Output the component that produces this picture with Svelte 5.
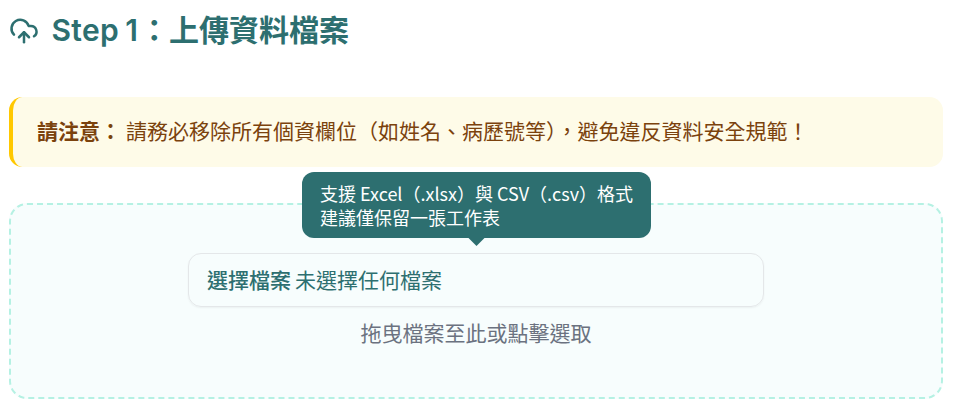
<script>
  const tips = ['支援 Excel（.xlsx）與 CSV（.csv）格式', '建議僅保留一張工作表'];
</script>

<main lang="zh-Hant">
  <h2>
    <svg viewBox="0 0 24 24" width="30" height="30" fill="none" stroke="currentColor" stroke-width="2" stroke-linecap="round" stroke-linejoin="round" aria-hidden="true">
      <path d="M12 13v8" />
      <path d="M4 14.899A7 7 0 1 1 15.71 8h1.79a4.5 4.5 0 0 1 2.5 8.242" />
      <path d="m8 17 4-4 4 4" />
    </svg>
    <span><span class="step">Step 1</span>：上傳資料檔案</span>
  </h2>

  <div class="notice">
    <strong>請注意：</strong>
    <span>請務必移除所有個資欄位（如姓名、病歷號等），避免違反資料安全規範！</span>
  </div>

  <section class="dropzone">
    <div class="field">
      <div class="tooltip" role="tooltip">
        {#each tips as tip}<div>{tip}</div>{/each}
      </div>
      <b>選擇檔案</b><span>未選擇任何檔案</span>
    </div>
    <p>拖曳檔案至此或點擊選取</p>
  </section>
</main>

<style>
  :global(body) {
    background: #fff;
  }
  main {
    box-sizing: border-box;
    width: 962px;
    height: 418px;
    padding: 8px 19px 0 9px;
    font-family: 'Noto Sans CJK TC', sans-serif;
    font-size: 21px;
    overflow: hidden;
  }
  h2 {
    display: flex;
    align-items: center;
    gap: 12.5px;
    height: 45px;
    margin: 0 0 44px;
    color: #2d6f70;
    font: 600 30px/45px Inter, 'Noto Sans CJK TC', sans-serif;
  }
  .step {
    letter-spacing: 0.3px;
    word-spacing: -1.5px;
    margin-right: 0.8px;
  }
  .notice {
    box-sizing: border-box;
    display: flex;
    align-items: center;
    gap: 5px;
    height: 70px;
    padding: 0 0 4px 24px;
    border-left: 4px solid #ffc800;
    border-radius: 13.5px;
    background: #fefbe8;
    color: #7b420d;
    white-space: nowrap;
  }
  .notice strong {
    font-weight: 700;
  }
  .dropzone {
    box-sizing: border-box;
    display: flex;
    flex-direction: column;
    align-items: center;
    height: 196px;
    margin-top: 36px;
    padding-top: 48px;
    border: 2px dashed #b5f1e3;
    border-radius: 18px;
    background: #f7fdfd;
  }
  .field {
    position: relative;
    box-sizing: border-box;
    display: flex;
    align-items: center;
    gap: 4px;
    width: 576px;
    height: 54px;
    padding: 0 0 3px 18px;
    border: 1px solid #e4e7e9;
    border-radius: 13px;
    box-shadow: 0 1px 2px rgb(0 0 0 / 5%);
    color: #2d6f70;
  }
  .field b {
    font-weight: 500;
  }
  .tooltip {
    position: absolute;
    left: 113px;
    bottom: 68px;
    box-sizing: border-box;
    width: 349px;
    height: 66px;
    padding: 9px 18px;
    border-radius: 12px;
    background: #2d6f70;
    color: #fff;
    font-size: 18px;
    line-height: 24px;
    white-space: nowrap;
  }
  .tooltip::after {
    content: '';
    position: absolute;
    left: 50%;
    bottom: -8px;
    width: 18px;
    height: 9px;
    margin-left: -9px;
    background: inherit;
    clip-path: polygon(0 0, 100% 0, 50% 100%);
  }
  p {
    margin: 9px 0 0;
    color: #6b7280;
    line-height: 32px;
  }
</style>
